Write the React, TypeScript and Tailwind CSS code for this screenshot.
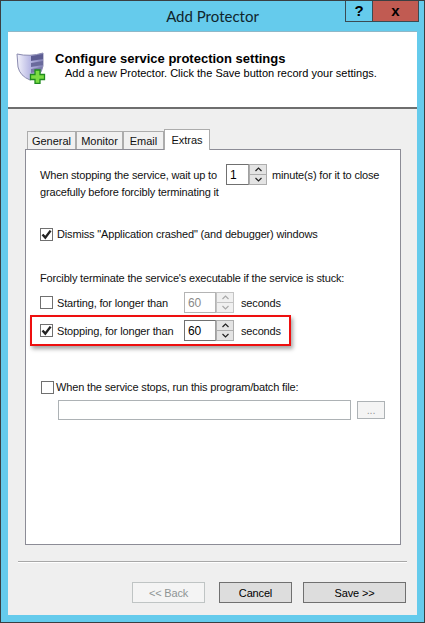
import React from 'react';

const FONT = { fontFamily: '"Liberation Sans", Arial, sans-serif' };
const TITLE_FONT = { fontFamily: 'Lato, "Noto Sans", sans-serif' };

const ShieldIcon: React.FC = () => (
  <svg width="30" height="32" viewBox="0 0 30 32" className="shrink-0 -mt-[2px]">
    <defs>
      <linearGradient id="shieldFill" x1="0" x2="1" y1="0" y2="0">
        <stop offset="0" stopColor="#f2f2fb" />
        <stop offset="0.5" stopColor="#b9b9e4" />
        <stop offset="1" stopColor="#8080b4" />
      </linearGradient>
    </defs>
    <path d="M1 2 Q14 5 27 1 L27 14 Q25 25 14 28 Q4 24 2 15 Z" fill="url(#shieldFill)" stroke="#8a8ab0" strokeWidth="1" />
    <path d="M15 4 L27 2 L27 7 L15 9 Z" fill="#5d5d92" />
    <path d="M15 11 L27 9 L27 13 L15 15 Z" fill="#6a6a9c" />
    <path d="M15 17 L26 15 L25 19 L15 21 Z" fill="#7a7aa8" />
    <path d="M19 18 h5 v4.500 h4.500 v5 h-4.500 v4 h-5 v-4 h-4.500 v-5 h4.500 z" fill="#7bdc42" stroke="#1f8a1f" strokeWidth="1.3" />
  </svg>
);

const Check: React.FC = () => (
  <svg width="11" height="11" viewBox="0 0 11 11">
    <path d="M1.5 5.5 L4.300 8.600 L9.600 1.600" fill="none" stroke="#222" strokeWidth="2.4" />
  </svg>
);

const Checkbox: React.FC<{ checked?: boolean }> = ({ checked }) => (
  <div className="w-[13px] h-[13px] border border-[#707070] bg-white flex items-center justify-center shrink-0">
    {checked && <Check />}
  </div>
);

const Arrow: React.FC<{ up?: boolean; disabled?: boolean }> = ({ up, disabled }) => (
  <div className={`h-[9px] w-full flex items-center justify-center ${disabled ? 'bg-[#f0f0f0]' : 'bg-[#e4e4e4]'}`}>
    <svg width="7" height="5" viewBox="0 0 7 5">
      <path
        d={up ? 'M0.5 4 L3.5 1 L6.5 4' : 'M0.5 1 L3.5 4 L6.5 1'}
        fill="none"
        stroke={disabled ? '#a8a8a8' : '#222'}
        strokeWidth="1.2"
      />
    </svg>
  </div>
);

const Spinner: React.FC<{ value: string; width: string; disabled?: boolean }> = ({ value, width, disabled }) => (
  <div className={`flex h-[21px] shrink-0 ${width}`}>
    <div
      className={`flex-1 border pl-[3px] flex items-center text-[12px] ${
        disabled ? 'border-[#b4b4b4] text-[#8a8a8a]' : 'border-[#707070] border-r-[#a0a0a0] text-black'
      }`}
    >
      {value}
    </div>
    <div className={`w-[18px] flex flex-col justify-between py-px px-px ${disabled ? 'bg-[#c4c4c4]' : 'bg-[#adadad]'}`}>
      <Arrow up disabled={disabled} />
      <Arrow disabled={disabled} />
    </div>
  </div>
);

const Tab: React.FC<{ label: string; width: string }> = ({ label, width }) => (
  <div className={`h-[18px] mt-[2px] border border-b-0 border-[#acacac] bg-[#f0f0f0] flex items-center justify-center ${width}`}>
    {label}
  </div>
);

const DialogButton: React.FC<{ label: string; width: string; disabled?: boolean }> = ({ label, width, disabled }) => (
  <div
    className={`h-[21px] border flex items-center justify-center ${width} ${
      disabled ? 'border-[#bfc4c4] bg-[#f4f4f4] text-[#8f9494]' : 'border-[#707070] bg-[#dddddd] text-black'
    }`}
  >
    {label}
  </div>
);

export default function App() {
  return (
    <div
      style={FONT}
      className="w-[425px] h-[623px] bg-[#65cbec] border border-[#3a3f42] flex flex-col text-[11px] leading-[16px] text-[#111] overflow-hidden whitespace-nowrap"
    >
      <div className="h-[30px] shrink-0 relative flex items-center justify-center">
        <span style={TITLE_FONT} className="text-[15px] text-[#10252c]">Add Protector</span>
        <div className="absolute -top-px right-[5px] flex h-[22px] border border-t-0 border-[#3a4a52]">
          <div className="w-[27px] border-r border-[#3a4a52] flex items-center justify-center font-bold text-[15px] text-black">?</div>
          <div className="w-[45px] bg-[#c15b52] flex items-center justify-center font-bold text-[15px] text-black">x</div>
        </div>
      </div>

      <div className="mx-[7px] flex-1 flex flex-col border-t border-[#8fb8c8] min-h-0">
        <div className="h-[77px] shrink-0 bg-white border-b-2 border-[#6e6e6e] flex items-center pl-[8px] gap-[9px] pb-[1px]">
          <ShieldIcon />
          <div className="-mt-[7px]">
            <div className="font-bold text-[13px] leading-[15px] text-black">Configure service protection settings</div>
            <div className="pl-[10px] leading-[15px] text-black">Add a new Protector. Click the Save button record your settings.</div>
          </div>
        </div>

        <div className="flex-1 bg-[#efefef] flex flex-col min-h-0 pl-[10px] pr-[10px]">
          <div className="ml-[7px] mr-[6px] mt-[20px] flex h-[20px] pl-[2px] relative z-10">
            <Tab label="General" width="w-[49px]" />
            <Tab label="Monitor" width="w-[47px]" />
            <Tab label="Email" width="w-[41px]" />
            <div className="h-[21px] w-[46px] border border-b-0 border-[#acacac] bg-white flex items-center justify-center">Extras</div>
          </div>

          <div className="ml-[7px] mr-[6px] h-[396px] border border-[#8c8c96] bg-white relative px-[14px] pt-[14px] tracking-[-0.16px]">
            <div className="flex items-center h-[21px]">
              <span className="w-[186px] shrink-0">When stopping the service, wait up to</span>
              <Spinner value="1" width="w-[41px]" />
              <span className="ml-[5px]">minute(s) for it to close</span>
            </div>
            <div className="-mt-[1px] h-[16px]">gracefully before forcibly terminating it</div>

            <div className="mt-[26px] flex items-center gap-[4px] h-[16px]">
              <Checkbox checked />
              <span>Dismiss "Application crashed" (and debugger) windows</span>
            </div>

            <div className="mt-[28px] h-[16px]">Forcibly terminate the service's executable if the service is stuck:</div>

            <div className="mt-[6px] flex items-center h-[21px]">
              <Checkbox />
              <span className="ml-[4px] w-[127px] shrink-0">Starting, for longer than</span>
              <Spinner value="60" width="w-[50px]" disabled />
              <span className="ml-[7px]">seconds</span>
            </div>
            <div className="mt-[7px] flex items-center h-[21px]">
              <Checkbox checked />
              <span className="ml-[4px] w-[127px] shrink-0">Stopping, for longer than</span>
              <Spinner value="60" width="w-[50px]" />
              <span className="ml-[7px]">seconds</span>
            </div>

            <div className="mt-[38px] flex items-center gap-[2px] h-[16px] pl-px">
              <Checkbox />
              <span>When the service stops, run this program/batch file:</span>
            </div>
            <div className="mt-[5px] ml-[18px] flex items-center gap-[6px]">
              <div className="w-[293px] h-[20px] border border-[#adb2b5] bg-white" />
              <div className="w-[28px] h-[18px] border border-[#adb2b5] bg-[#f4f4f4] text-[#9a9a9a] flex items-center justify-center text-[11px] leading-none">...</div>
            </div>

            {/* Red callout drawn over the screenshot */}
            <div className="absolute left-[4px] top-[165px] w-[261px] h-[31px] border-2 border-[#ee0f0f] shadow-[2px_3px_4px_rgba(0,0,0,0.35)]" />
          </div>

          <div className="mt-[16px] h-[2px] border-t border-[#a8a8a8] bg-white" />

          <div className="mt-[19px] pr-px flex justify-end tracking-[-0.16px]">
            <DialogButton label="<< Back" width="w-[73px]" disabled />
            <div className="w-[14px]" />
            <DialogButton label="Cancel" width="w-[73px]" />
            <div className="w-[11px]" />
            <DialogButton label="Save >>" width="w-[103px]" />
          </div>
        </div>
      </div>
      <div className="h-[7px] shrink-0" />
    </div>
  );
}
